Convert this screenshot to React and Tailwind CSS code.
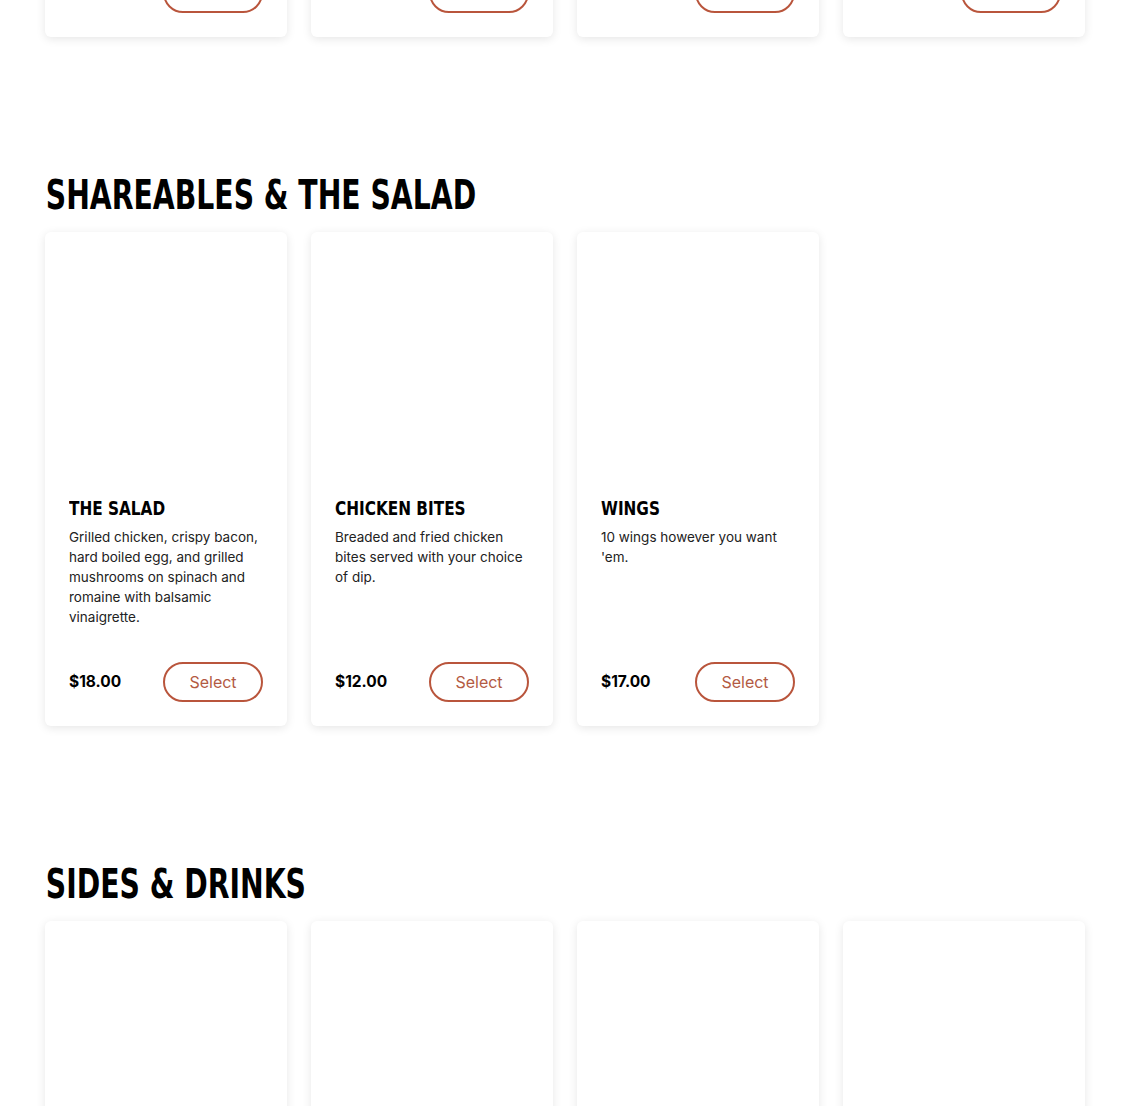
const heading = { fontFamily: '"DejaVu Sans Condensed", "DejaVu Sans", sans-serif' };

const sections = [
  {
    title: 'BURGERS',
    items: [
      { name: 'THE CLASSIC', desc: 'Two smashed patties, American cheese, pickles, onions and house sauce.', price: '$14.00' },
      { name: 'THE BACON', desc: 'Two smashed patties, crispy bacon, cheddar and smoky barbecue sauce.', price: '$16.00' },
      { name: 'THE MUSHROOM', desc: 'Grilled mushrooms, Swiss cheese and garlic aioli on a toasted bun.', price: '$16.00' },
      { name: 'THE VEGGIE', desc: 'Plant-based patty, lettuce, tomato, onion and house sauce.', price: '$15.00' },
    ],
  },
  {
    title: 'SHAREABLES & THE SALAD',
    items: [
      {
        name: 'THE SALAD',
        desc: 'Grilled chicken, crispy bacon, hard boiled egg, and grilled mushrooms on spinach and romaine with balsamic vinaigrette.',
        price: '$18.00',
      },
      { name: 'CHICKEN BITES', desc: 'Breaded and fried chicken bites served with your choice of dip.', price: '$12.00' },
      { name: 'WINGS', desc: "10 wings however you want 'em.", price: '$17.00' },
    ],
  },
  {
    title: 'SIDES & DRINKS',
    items: [
      { name: 'FRIES', desc: 'Crispy golden fries.', price: '$5.00' },
      { name: 'ONION RINGS', desc: 'Beer battered onion rings.', price: '$6.00' },
      { name: 'SODA', desc: 'Fountain soda.', price: '$3.00' },
      { name: 'SHAKE', desc: 'Vanilla, chocolate or strawberry.', price: '$7.00' },
    ],
  },
];

const MenuCard = ({ item }) => (
  <div className="flex flex-col rounded-md bg-white shadow-[0_2px_10px_rgba(0,0,0,0.1)]">
    <div className="h-[240px]" />
    <div className="flex flex-1 flex-col px-6 pt-6 pb-6">
      <h3 className="origin-left scale-x-[0.85] text-[20px] font-bold leading-6 text-black" style={heading}>
        {item.name}
      </h3>
      <p className="mt-[7px] text-[13.5px] leading-5 text-[#222]">{item.desc}</p>
      <div className="mt-auto flex items-center justify-between pt-[35px]">
        <span className="text-[15.5px] font-bold text-black">{item.price}</span>
        <button className="h-10 w-[100px] rounded-full border-2 border-[#b9553c] text-[16px] text-[#b35a43]">
          Select
        </button>
      </div>
    </div>
  </div>
);

export default function App() {
  return (
    <div className="min-h-screen overflow-hidden bg-white" style={{ fontFamily: 'Inter, "Open Sans", sans-serif' }}>
      <div className="-mt-[478px] flex flex-col gap-[134px] px-[45px] pb-20">
        {sections.map((s) => (
          <section key={s.title}>
            <h2
              className="mb-[13px] origin-left scale-x-[0.786] pl-px text-[40px] font-bold leading-[48px] text-black"
              style={heading}
            >
              {s.title}
            </h2>
            <div className="grid grid-cols-4 gap-6">
              {s.items.map((item) => (
                <MenuCard key={item.name} item={item} />
              ))}
            </div>
          </section>
        ))}
      </div>
    </div>
  );
}
